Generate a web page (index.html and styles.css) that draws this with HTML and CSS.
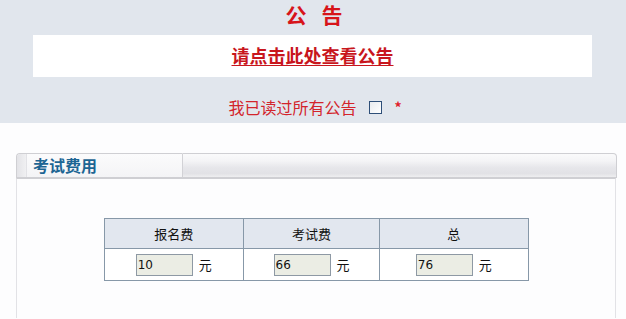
FILE: index.html
```html
<!DOCTYPE html>
<html>
<head>
<meta charset="utf-8">
<link rel="stylesheet" href="styles.css">
</head>
<body>
<div class="notice">
  <div class="notice-title">公告</div>
  <div class="notice-box"><a class="notice-link" href="#">请点击此处查看公告</a></div>
  <div class="notice-confirm">
    <span>我已读过所有公告</span>
    <span class="checkbox"></span>
    <span class="required">*</span>
  </div>
</div>
<div class="panel">
  <div class="panel-head">
    <div class="panel-tab"><span class="tab-cap"></span><span class="tab-label">考试费用</span></div>
    <div class="panel-rest"></div>
  </div>
  <div class="panel-body">
    <table class="fees">
      <tr>
        <th class="c1">报名费</th>
        <th class="c2">考试费</th>
        <th class="c3">总</th>
      </tr>
      <tr>
        <td><span class="field">10</span><span class="unit">元</span></td>
        <td><span class="field">66</span><span class="unit">元</span></td>
        <td><span class="field">76</span><span class="unit">元</span></td>
      </tr>
    </table>
  </div>
</div>
</body>
</html>
```
FILE: styles.css
```css
html, body {
  margin: 0;
  padding: 0;
  background: #fdfdfe;
  font-family: "Noto Sans CJK SC", "DejaVu Sans", sans-serif;
}
.notice {
  background: #e1e6ed;
  height: 123px;
  box-sizing: border-box;
  padding-top: 1px;
}
.notice-title {
  text-align: center;
  color: #d7141a;
  font-weight: bold;
  font-size: 21px;
  line-height: 26px;
  letter-spacing: 15px;
  padding-left: 17px;
  height: 34px;
}
.notice-box {
  margin: 0 34px 0 33px;
  height: 42px;
  background: #ffffff;
  display: flex;
  align-items: center;
  justify-content: center;
}
.notice-link {
  color: #c8161d;
  font-weight: bold;
  font-size: 18px;
  line-height: 20px;
  text-decoration: underline;
  text-underline-offset: 2px;
  position: relative;
  top: -1px;
}
.notice-confirm {
  margin-top: 20px;
  display: flex;
  align-items: center;
  justify-content: center;
  color: #d3242b;
  font-size: 16px;
  line-height: 20px;
  padding-left: 4px;
}
.checkbox {
  display: inline-block;
  width: 11px;
  height: 11px;
  border: 1px solid #2e4f78;
  background: linear-gradient(135deg, #e8ebef, #ffffff);
  margin-left: 13px;
}
.required {
  margin-left: 12px;
  color: #e0202a;
  font-size: 14px;
  font-weight: bold;
}
.panel {
  margin: 30px 9px 0 16px;
}
.panel-head {
  display: flex;
  height: 25px;
}
.panel-tab {
  display: flex;
  width: 167px;
  box-sizing: border-box;
  border: 1px solid #cfcfd3;
  border-right: 1px solid #d2d2d6;
  border-radius: 4px 0 0 0;
  background: linear-gradient(to bottom, #fbfbfc, #f4f4f6);
}
.tab-cap {
  width: 9px;
  background: linear-gradient(to right, #e3e3e7, #f0f0f2);
  border-right: 1px solid #e2e2e6;
  border-radius: 3px 0 0 0;
}
.tab-label {
  color: #1d6593;
  font-weight: bold;
  font-size: 16px;
  line-height: 22px;
  padding-left: 6px;
}
.panel-rest {
  flex: 1;
  box-sizing: border-box;
  border: 1px solid #cfcfd3;
  border-left: none;
  border-radius: 0 4px 0 0;
  background: linear-gradient(to bottom, #fafafb 0%, #f4f4f6 30%, #e6e6ea 60%, #e2e2e6 85%, #eeeef0 100%);
}
.panel-body {
  border-left: 1px solid #e2e2e6;
  border-right: 1px solid #e2e2e6;
  border-top: 1px solid #cfcfd3;
  margin-right: 1px;
  padding-top: 39px;
  height: 100px;
}
.fees {
  border-collapse: collapse;
  margin: 0 auto;
  width: 425px;
  font-size: 13px;
  color: #111;
}
.fees th, .fees td {
  border: 1px solid #8798a8;
  text-align: center;
  padding: 0;
}
.fees th {
  background: #e2e7ef;
  font-weight: normal;
  height: 29px;
}
.fees td {
  background: #ffffff;
  height: 31px;
}
.c1 { width: 139px; }
.c2 { width: 136px; }
.c3 { width: 148px; }
.field {
  display: inline-block;
  vertical-align: middle;
  width: 54px;
  height: 20px;
  border: 1px solid #8e99a4;
  background: #ebede4;
  text-align: left;
  font-family: "DejaVu Sans", sans-serif;
  font-size: 12px;
  line-height: 20px;
  padding-left: 1px;
  color: #111;
}
.unit {
  display: inline-block;
  vertical-align: middle;
  margin-left: 6px;
  font-size: 13px;
}
```
